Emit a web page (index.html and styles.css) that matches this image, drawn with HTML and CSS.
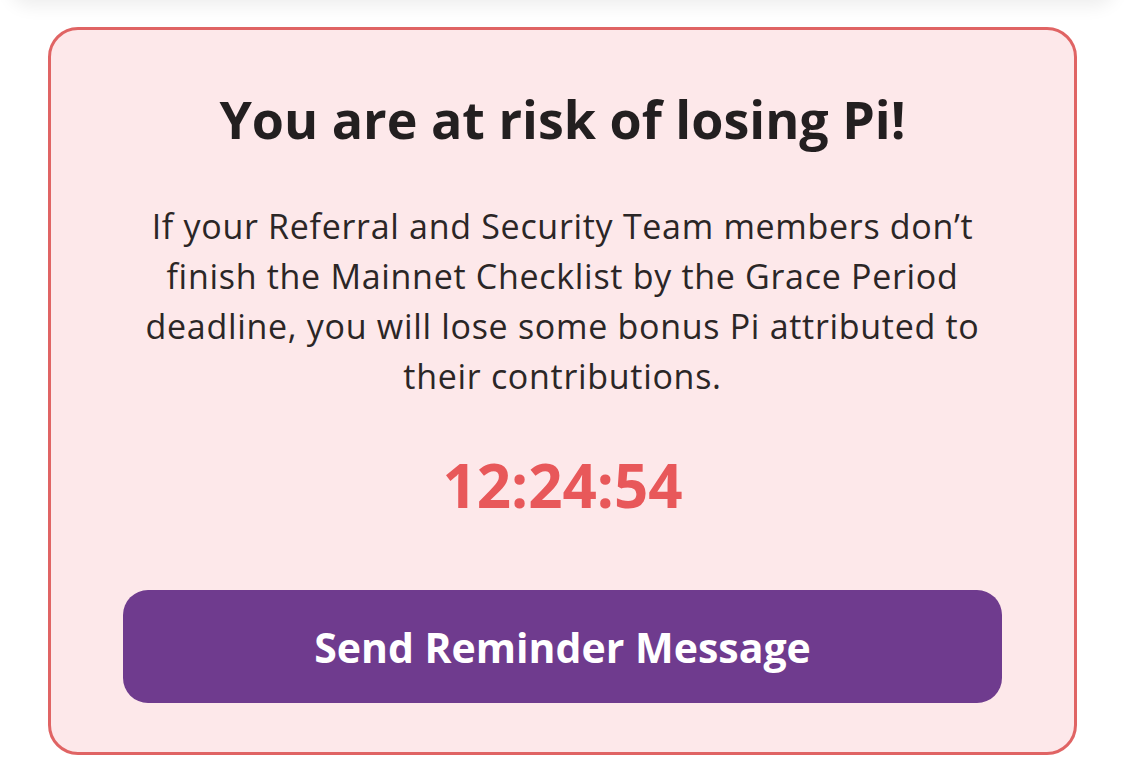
FILE: index.html
```html
<!DOCTYPE html>
<html>
<head>
<meta charset="utf-8">
<link rel="stylesheet" href="styles.css">
</head>
<body>
<div class="prev-card"></div>
<section class="risk-card">
  <h1 class="risk-title">You are at risk of losing Pi!</h1>
  <p class="risk-text">If your Referral and Security Team members don’t<br>finish the Mainnet Checklist by the Grace Period<br>deadline, you will lose some bonus Pi attributed to<br>their contributions.</p>
  <div class="risk-timer">12:24:54</div>
  <button class="risk-button">Send Reminder Message</button>
</section>
</body>
</html>
```
FILE: styles.css
```css
html, body {
  margin: 0;
  padding: 0;
  background: #ffffff;
}
body {
  width: 1125px;
  height: 772px;
  overflow: hidden;
  font-family: "Open Sans", "Noto Sans", sans-serif;
}
.prev-card {
  height: 40px;
  margin: -40px 10px 0 10px;
  background: #ffffff;
  border-radius: 24px;
  box-shadow: 0 6px 18px rgba(0, 0, 0, 0.07);
}
.risk-card {
  box-sizing: border-box;
  margin: 27px 0 0 48px;
  width: 1029px;
  height: 728px;
  background: #fde8ea;
  border: 3px solid #e06464;
  border-radius: 30px;
  padding: 0 72px;
  display: flex;
  flex-direction: column;
  align-items: center;
}
.risk-title {
  margin: 59px 0 0 0;
  font-size: 52px;
  line-height: 60px;
  font-weight: 700;
  color: #231f20;
  text-align: center;
}
.risk-text {
  margin: 52px 0 0 0;
  font-size: 34px;
  letter-spacing: 0.7px;
  line-height: 50px;
  color: #2b2626;
  text-align: center;
}
.risk-timer {
  margin-top: 49px;
  font-size: 60px;
  line-height: 70px;
  font-weight: 700;
  color: #e8585a;
}
.risk-button {
  margin-top: auto;
  margin-bottom: 49px;
  width: 100%;
  height: 113px;
  border: none;
  border-radius: 25px;
  background: #6f3b8e;
  color: #ffffff;
  font-family: inherit;
  font-size: 41px;
  font-weight: 700;
}
```
